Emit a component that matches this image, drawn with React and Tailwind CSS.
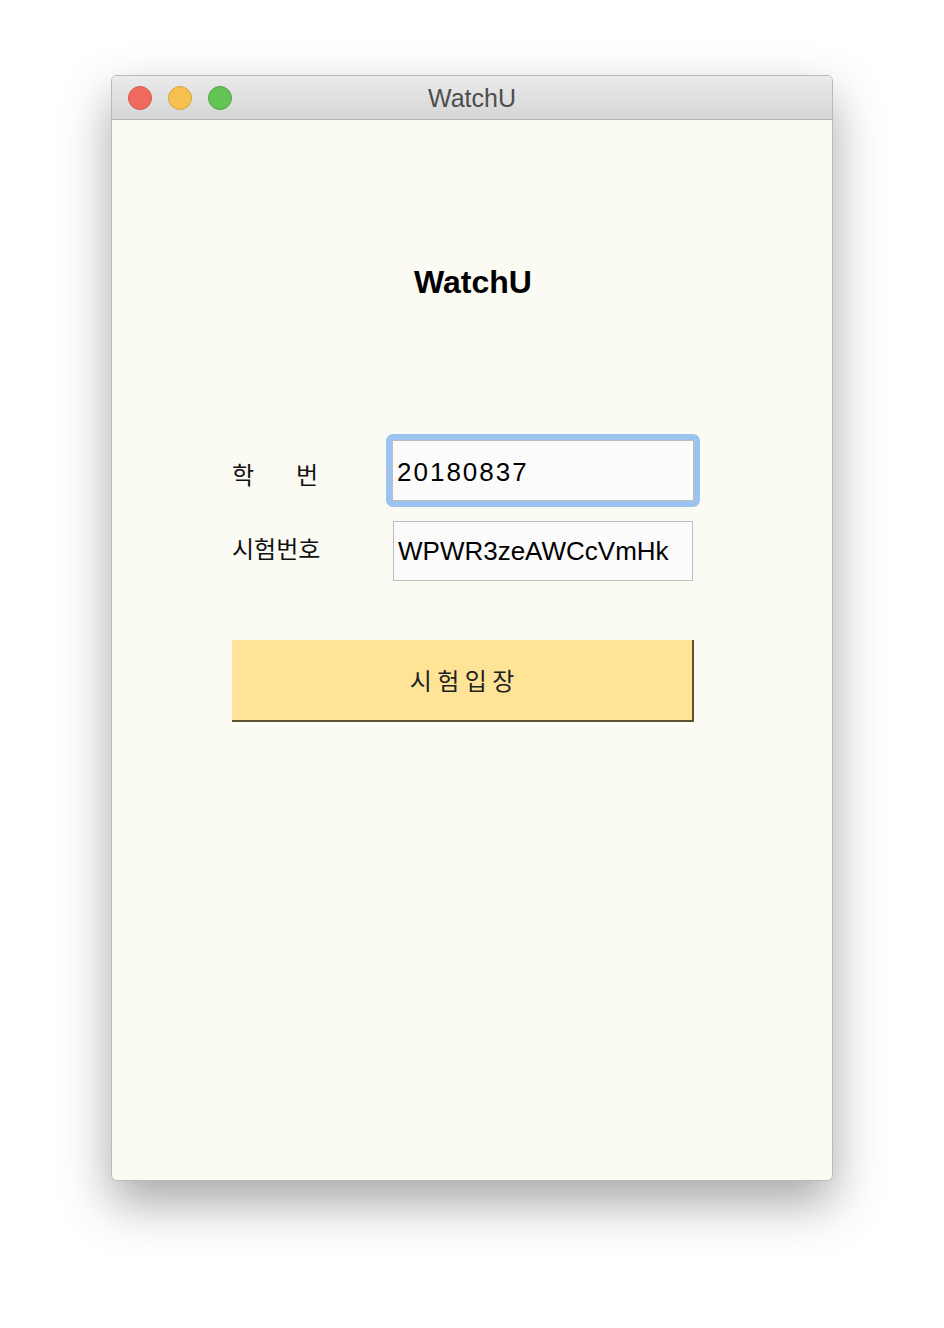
import React from "react";

const font = { fontFamily: '"Liberation Sans", "Noto Sans CJK KR", sans-serif' };
const kr = { fontFamily: '"Noto Sans CJK KR", sans-serif' };

export default function App() {
  return (
    <div
      className="w-[944px] h-[1328px] bg-white flex justify-center pt-[75px]"
      style={font}
    >
      <div className="w-[722px] h-[1106px] rounded-[6px] overflow-hidden border border-[#b9b9b9] bg-[#fbfaf3] shadow-[0_22px_50px_rgba(0,0,0,0.35)] flex flex-col">
        {/* title bar */}
        <div className="h-[44px] shrink-0 bg-gradient-to-b from-[#ebebeb] to-[#d5d5d5] border-b border-[#b4b4b4] relative flex items-center justify-center">
          <div className="absolute left-[16px] top-[10px] flex gap-[16px]">
            <span className="w-[24px] h-[24px] rounded-full bg-[#ee6a5e] border border-[#d4574b]" />
            <span className="w-[24px] h-[24px] rounded-full bg-[#f5c04f] border border-[#d9a43c]" />
            <span className="w-[24px] h-[24px] rounded-full bg-[#61c454] border border-[#4fa83f]" />
          </div>
          <span className="text-[25px] text-[#4d4d4d] pt-[2px]">WatchU</span>
        </div>

        {/* content */}
        <div className="flex flex-col pl-[120px] pt-[146px]">
          <h1 className="w-[482px] text-center text-[32px] font-bold text-black leading-none">
            WatchU
          </h1>

          <div className="mt-[136px] flex flex-col gap-[14px]">
            <div className="flex items-center">
              <div className="w-[154px] flex justify-between pr-[68px] pt-[6px] text-[24px] text-[#111]" style={kr}>
                <span>학</span>
                <span>번</span>
              </div>
              <div className="w-[314px] h-[73px] rounded-[7px] bg-[#9cc2f0] p-[6px]">
                <div className="w-full h-full bg-[#fbfbfb] border border-[#bdbdbd] flex items-center pl-[4px] pt-[3px] text-[26px] tracking-[2px] text-black">
                  20180837
                </div>
              </div>
            </div>
            <div className="flex items-center">
              <div className="w-[161px] pb-[6px] text-[24px] text-[#111]" style={kr}>
                시험번호
              </div>
              <div className="w-[300px] h-[60px] bg-[#fbfbfb] border border-[#bdbdbd] flex items-center pl-[4px] text-[26px] text-black">
                WPWR3zeAWCcVmHk
              </div>
            </div>
          </div>

          <button className="mt-[59px] w-[462px] h-[82px] bg-[#ffe498] border-r-2 border-b-2 border-[#5e5232] text-[24px] text-[#222] flex items-center justify-center" style={kr}>
            시 험 입 장
          </button>
        </div>
      </div>
    </div>
  );
}
